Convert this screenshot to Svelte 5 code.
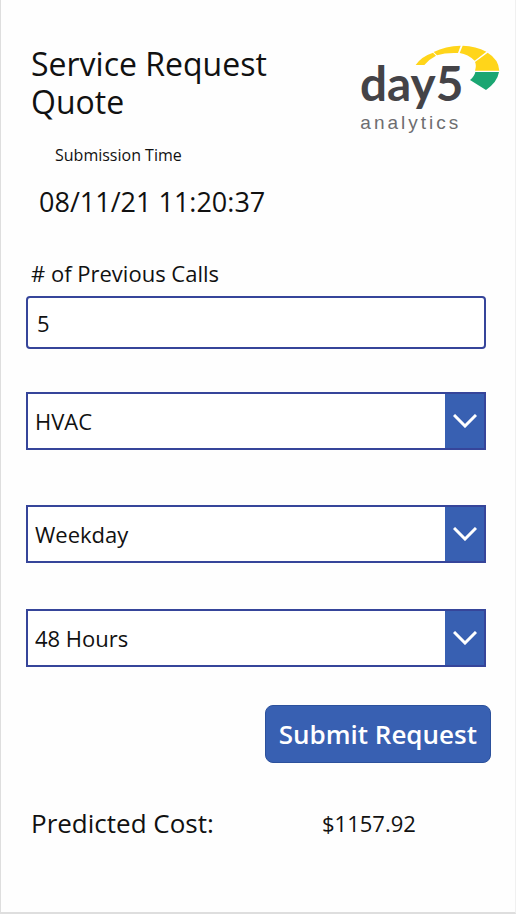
<script lang="ts">
    let calls = $state("5");
    let submitted = $state("08/11/21 11:20:37");
    let cost = $state(1157.92);

    let fields = $state([
        { id: "service", label: "Service type", value: "HVAC", options: ["HVAC", "Plumbing", "Electrical"] },
        { id: "day", label: "Day", value: "Weekday", options: ["Weekday", "Weekend"] },
        { id: "response", label: "Response time", value: "48 Hours", options: ["24 Hours", "48 Hours", "72 Hours"] }
    ]);
</script>

<main>
    <header>
        <h1>Service Request Quote</h1>
        <svg class="logo" viewBox="18 30 444 288" role="img" aria-label="day5 analytics">
            <g fill="#ffd51a">
                <path d="M197 105Q213 80 249 68L258 77Q238 87 223 105Z" />
                <path d="M251 66Q286 48 332 47L324 69Q288 67 261 76Z" />
                <path d="M338 47Q378 48 409 65L374 92Q354 73 329 69Z" />
                <path d="M413 68Q446 88 448 122H375Q380 106 375 96Z" />
            </g>
            <path fill="#1ba672" d="M376 126H447Q442 156 408 180L360 150Q373 140 376 126Z" />
            <text class="brand" x="30" y="213">day5</text>
            <text class="sub" x="31" y="297">analytics</text>
        </svg>
    </header>

    <section class="time">
        <p class="caption">Submission Time</p>
        <time>{submitted}</time>
    </section>

    <form onsubmit={(e) => e.preventDefault()}>
        <label for="calls"># of Previous Calls</label>
        <input id="calls" type="text" inputmode="numeric" bind:value={calls} />

        {#each fields as field (field.id)}
            <div class="select">
                <select id={field.id} aria-label={field.label} bind:value={field.value}>
                    {#each field.options as option}
                        <option>{option}</option>
                    {/each}
                </select>
                <span class="arrow">
                    <svg viewBox="0 0 24 14" aria-hidden="true">
                        <path d="M1 1L12 12L23 1" />
                    </svg>
                </span>
            </div>
        {/each}

        <button type="submit">Submit Request</button>
    </form>

    <footer>
        <span class="cost-label">Predicted Cost:</span>
        <output>${cost}</output>
    </footer>
</main>

<style>
    :global(body) {
        background: #fefefe;
    }

    main {
        box-sizing: border-box;
        min-height: 100vh;
        padding: 40px 29px 0 25px;
        border: 1px solid #dedede;
        border-top: 0;
        border-right-color: #f0f0f0;
        border-bottom-width: 2px;
        font-family: "Open Sans", "Noto Sans", sans-serif;
        color: #111;
    }

    header {
        display: flex;
        justify-content: space-between;
        padding-left: 5px;
        margin-right: -18px;
    }

    h1 {
        max-width: 260px;
        margin: 5px 0 0;
        font-size: 32px;
        font-weight: 400;
        line-height: 38px;
    }

    .logo {
        flex: none;
        width: 148px;
        height: 96px;
    }

    .brand {
        font-family: Lato, sans-serif;
        font-size: 143px;
        font-weight: 700;
        fill: #444347;
    }

    .sub {
        font-family: "Liberation Sans", Arial, sans-serif;
        font-size: 57px;
        letter-spacing: 9px;
        fill: #6d6d70;
    }

    .time {
        padding-left: 13px;
    }

    .caption {
        margin: 7px 0 0;
        padding-left: 16px;
        font-size: 16px;
        line-height: 24px;
    }

    time {
        display: block;
        margin-top: 17px;
        font-size: 27px;
        line-height: 36px;
    }

    form {
        display: flex;
        flex-direction: column;
        margin-top: 37px;
    }

    label {
        padding-left: 5px;
        font-size: 22px;
        line-height: 32px;
    }

    input,
    select {
        box-sizing: border-box;
        width: 100%;
        border: 2px solid #36459a;
        background: #fff;
        font: inherit;
        font-size: 22px;
        color: #111;
    }

    input {
        height: 53px;
        margin: 7px 0 43px;
        padding: 0 9px;
        border-radius: 4px;
    }

    .select {
        position: relative;
        margin-bottom: 55px;
    }

    .select + .select {
        margin-bottom: 46px;
    }

    select {
        display: block;
        height: 58px;
        padding: 0 50px 0 7px;
        border-radius: 0;
        appearance: none;
    }

    .arrow {
        position: absolute;
        top: 2px;
        right: 2px;
        bottom: 2px;
        display: flex;
        align-items: center;
        justify-content: center;
        width: 39px;
        background: #3860b2;
        pointer-events: none;
    }

    .arrow svg {
        width: 24px;
        height: 14px;
        fill: none;
        stroke: #fff;
        stroke-width: 3;
    }

    button {
        align-self: flex-end;
        height: 58px;
        margin: -8px -5px 0 0;
        padding: 0 13px;
        border: 1px solid #2c519c;
        border-radius: 8px;
        background: #3860b2;
        font: inherit;
        font-size: 26px;
        font-weight: 600;
        color: #fff;
        cursor: pointer;
    }

    footer {
        display: grid;
        grid-template-columns: 291px 1fr;
        align-items: center;
        padding-left: 5px;
        margin-top: 42px;
        line-height: 36px;
    }

    .cost-label {
        font-size: 26px;
    }

    output {
        font-size: 22px;
    }
</style>
